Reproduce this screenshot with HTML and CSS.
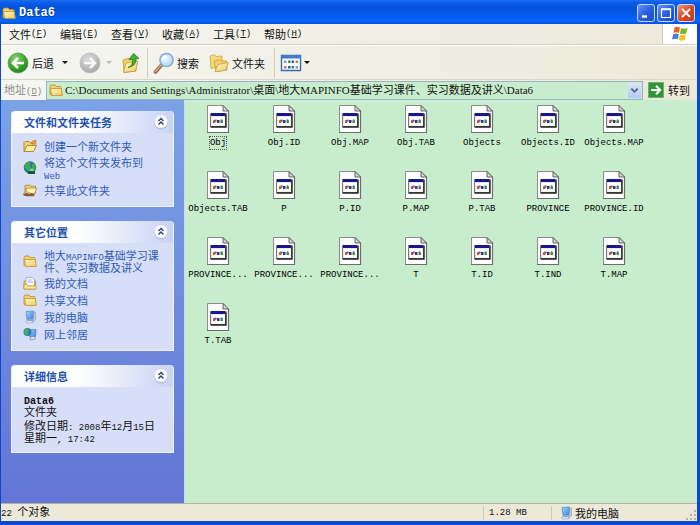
FILE: index.html
```
<!DOCTYPE html>
<html lang="zh-CN">
<head>
<meta charset="utf-8">
<title>Data6</title>
<link rel="stylesheet" href="styles.css">
</head>
<body>
<svg class="defs" aria-hidden="true">
  <defs>
    <linearGradient id="gFold" x1="0" y1="0" x2="1" y2="1"><stop offset="0" stop-color="#fffbd0"/><stop offset="1" stop-color="#efc95c"/></linearGradient>
    <radialGradient id="gGreen" cx=".4" cy=".3" r=".75"><stop offset="0" stop-color="#8fd878"/><stop offset=".6" stop-color="#3ba42c"/><stop offset="1" stop-color="#1f7d1a"/></radialGradient>
    <radialGradient id="gGrey" cx=".4" cy=".3" r=".75"><stop offset="0" stop-color="#dcdcdc"/><stop offset="1" stop-color="#a5a5a5"/></radialGradient>
    <radialGradient id="gLens" cx=".4" cy=".35" r=".7"><stop offset="0" stop-color="#f4fcff"/><stop offset="1" stop-color="#a5d5f2"/></radialGradient>
    <linearGradient id="gScreen" x1="0" y1="0" x2="1" y2="1"><stop offset="0" stop-color="#a8dcff"/><stop offset="1" stop-color="#2e80de"/></linearGradient>
  </defs>
  <symbol id="folder" viewBox="0 0 14 14">
    <path d="M1 3.5 2 2h4l1.3 1.5H11q1 0 1 1V12H2q-1 0-1-1Z" fill="#f3d36c" stroke="#b38b2a" stroke-width=".8"/>
    <path d="M1.5 5.5H12.3L13.4 12.4H2.8Z" fill="url(#gFold)" stroke="#bd922d" stroke-width=".8"/>
  </symbol>
  <symbol id="newfolder" viewBox="0 0 14 14">
    <path d="M1 3.5 2 2.500h4l1.300 1.500H10V12H1Z" fill="#f3d36c" stroke="#a87420" stroke-width=".8"/>
    <path d="M1 12.500 4 6.500H13.400L10.500 12.500Z" fill="#fff0a0" stroke="#a87420" stroke-width=".8"/>
    <path d="M8 4Q9 1 13 1.500L12.500 5.500 10.500 4.500Z" fill="#f39c3c" stroke="#c06a1c" stroke-width=".6"/>
  </symbol>
  <symbol id="globe" viewBox="0 0 14 14">
    <circle cx="7" cy="6.500" r="5.800" fill="#2b70b9" stroke="#1b5b38" stroke-width=".7"/>
    <path d="M2 3.500 5 1.200 8 2 6.500 4.500 8.500 7 5.500 10.500 3.500 8 1.500 7ZM9 3l3-.3 1 4-2.500 3L9 7Z" fill="#3fae4a"/>
    <path d="M5 10h7v3H5Z" fill="#0e5a3b"/><path d="m9 7 3 3H6Z" fill="#8fd67e"/>
  </symbol>
  <symbol id="share" viewBox="0 0 14 14">
    <path d="M2 2.500 7 2l1 1.300h4.500V10H2Z" fill="#f5d978" stroke="#a17a2c" stroke-width=".8"/>
    <path d="M3.500 5H13.500L12 10.500H2.500Z" fill="#fff0b0" stroke="#a17a2c" stroke-width=".7"/>
    <path d="M.5 10 4 8.500 8 10.500 12 11.500 11 13.300H4L.5 12.500Z" fill="#8a5b32"/>
    <path d="M1 10.300 4 9.300l3 1.600" stroke="#f0bf8a" fill="none"/>
  </symbol>
  <symbol id="docs" viewBox="0 0 14 14">
    <path d="M1 5h11.500v8H1Z" fill="#f3cf62" stroke="#b38b2a" stroke-width=".8"/>
    <path d="M3 1.500h6L11.500 4v6H3Z" fill="#fff" stroke="#7d97bd" stroke-width=".7"/>
    <path d="M4.500 4h4M4.500 6H10" stroke="#7fa8df" stroke-width=".9"/>
    <path d="M1 8.500h3l1 1.500h8v3H1Z" fill="#ffe894" stroke="#bd922d" stroke-width=".7"/>
  </symbol>
  <symbol id="computer" viewBox="0 0 14 14">
    <path d="M10 2.500 12.500 2V10L9 12Z" fill="#b9c6d8" stroke="#8291ad" stroke-width=".5"/>
    <path d="M3 1.500 10.500 1 10 9 4 9.500Z" fill="url(#gScreen)" stroke="#628fc4" stroke-width=".8"/>
    <path d="M5 9.500h4l1.500 2H4Z" fill="#90a8cb"/><path d="M2.500 11 9 10.700l1.500 1.800-7 .7Z" fill="#e6ecf6" stroke="#8399bb" stroke-width=".6"/>
  </symbol>
  <symbol id="network" viewBox="0 0 14 14">
    <path d="M6 3 13 2.500 12.500 9.500 7 10Z" fill="url(#gScreen)" stroke="#527db8" stroke-width=".8"/>
    <circle cx="4.500" cy="5" r="4" fill="#3276be"/>
    <path d="M2 2.500 5 1.200 6 3.500 4 5 5.500 7 3.500 8.500 1 6Z" fill="#45b552"/>
    <path d="m7 10 4-.5 1.500 2.500-5 1Z" fill="#e1e8f4" stroke="#7187a8" stroke-width=".7"/>
  </symbol>
  <symbol id="chev" viewBox="0 0 16 16">
    <circle cx="8" cy="8.500" r="7" fill="#7f93cf" opacity=".5"/>
    <circle cx="8" cy="7.500" r="6.800" fill="#fff" stroke="#c3cdea" stroke-width=".6"/>
    <path d="m5.500 7 2.500-2.500L10.500 7M5.500 10.500 8 8l2.500 2.500" fill="none" stroke="#223a74" stroke-width="1.300"/>
  </symbol>
  <symbol id="file" viewBox="0 0 24 30">
    <path d="M1.500 1.500H17L22.500 7V28.500H1.500Z" fill="#fff" stroke="#8c8c8c"/>
    <path d="M1 28.500H22.500V7" fill="none" stroke="#6e6e6e" stroke-width="1.200"/>
    <path d="M17 1.500V7H22.500Z" fill="#d5d9d5" stroke="#555" stroke-width=".9"/>
    <path d="M4.500 9.500H19.500V22.500H4.500Z" fill="#e9e9e9" stroke="#777"/>
    <path d="M4.500 23H20V9.500" fill="none" stroke="#222" stroke-width="1.400"/>
    <path d="M5 9H19V12H5Z" fill="#18188e"/><path d="M6 13H18.500V21.500H6Z" fill="#fff"/>
    <path d="M7 16.500 9 15.500 10 16.500 9 19H7Z" fill="#c44d38"/><path d="M9.500 15.500h1v2h-1ZM11 16h2.500v3H11Z" fill="#343489"/><path d="M14.500 16 16 15l1 2v2h-2.500Z" fill="#3d8a54"/>
  </symbol>
</svg>

<div class="window">
  <header class="titlebar">
    <svg class="ico14"><use href="#folder"/></svg>
    <h1>Data6</h1>
    <button class="win" aria-label="最小化"><svg viewBox="0 0 16 16"><path d="M4 11.500H9" stroke="#fff" stroke-width="2.400"/></svg></button>
    <button class="win" aria-label="最大化"><svg viewBox="0 0 16 16"><path d="M3.500 4.500H12.500V12.500H3.500Z" fill="none" stroke="#fff" stroke-width="1.200"/><path d="M3 4.200H13" stroke="#fff" stroke-width="2"/></svg></button>
    <button class="win close" aria-label="关闭"><svg viewBox="0 0 16 16"><path d="m4 4 8 8M12 4l-8 8" stroke="#fff" stroke-width="1.900"/></svg></button>
  </header>

  <div class="frame">
    <nav class="menubar">
      <button>文件<span class="en">(<u>F</u>)</span></button>
      <button>编辑<span class="en">(<u>E</u>)</span></button>
      <button>查看<span class="en">(<u>V</u>)</span></button>
      <button>收藏<span class="en">(<u>A</u>)</span></button>
      <button>工具<span class="en">(<u>T</u>)</span></button>
      <button>帮助<span class="en">(<u>H</u>)</span></button>
      <div class="flag"><svg viewBox="0 0 18 18">
        <path d="M3.500 2.500Q6 1 9 2.500L8 8Q5 6.500 2.500 8Z" fill="#e8622c"/>
        <path d="M10 3Q13 4.500 16.500 3L15.200 8.500Q12 10 9 8.500Z" fill="#76b82e"/>
        <path d="M2.300 9Q5 7.700 7.800 9.200L6.700 14.500Q4 13 1 14.500Z" fill="#3f7fdc"/>
        <path d="M8.800 9.500Q12 11 15 9.600L13.800 15Q11 16.500 7.700 15Z" fill="#f6c327"/>
      </svg></div>
    </nav>

    <div class="toolbar">
      <button class="back"><svg class="ico22" viewBox="0 0 22 22"><circle cx="11" cy="11" r="10" fill="url(#gGreen)" stroke="#4b9a41" stroke-width=".7"/><path d="M17 11H6.500M11 6 6 11l5 5" fill="none" stroke="#fff" stroke-width="2.500"/></svg>后退</button>
      <button class="drop" aria-label="后退列表"><i class="tri"></i></button>
      <button class="fwd" aria-label="前进" disabled><svg class="ico22" viewBox="0 0 22 22"><circle cx="11" cy="11" r="10" fill="url(#gGrey)" stroke="#b5b5b5" stroke-width=".7"/><path d="M5 11H15.500M11 6l5 5-5 5" fill="none" stroke="#f7f7f7" stroke-width="2.500"/></svg><i class="tri pale"></i></button>
      <button class="up" aria-label="向上"><svg class="ico22" viewBox="0 0 22 22"><path d="M3 8 9 6l1.500 1.500H16V19L4 20.500Z" fill="#f1cf63" stroke="#c29a38" stroke-width=".8"/><path d="M3.500 20.500 6 11 18 9 15.500 19Z" fill="url(#gFold)" stroke="#c29a38" stroke-width=".8"/><path d="M8 15.500Q13 14 12.500 7.500H9L13.500 1.500 19 6.500H16Q16.500 14 8 15.500Z" fill="#43ad35" stroke="#237d20" stroke-width=".8"/></svg></button>
      <button class="search"><svg class="ico22" viewBox="0 0 22 22"><path d="M8.500 13 2.500 20" stroke="#9a6a4c" stroke-width="3.600" stroke-linecap="round"/><path d="M8 13 2.500 19.500" stroke="#d9a37e" stroke-width="1.500" stroke-linecap="round"/><circle cx="13.500" cy="8" r="6.600" fill="url(#gLens)" stroke="#86a9cf" stroke-width="1.500"/><path d="M9.500 8Q10 4.500 13.500 4" fill="none" stroke="#fff" stroke-width="1.300"/></svg>搜索</button>
      <button class="folders"><svg class="ico22" viewBox="0 0 22 22"><path d="M2 4 6.500 2.500 8 4.500 14 4V14L3 16.500Z" fill="#f4d979" stroke="#cda644" stroke-width=".8"/><path d="M6 9.500 11 7.500 12.500 9H18.500L19 18 8 19.500Z" fill="#f2d16a" stroke="#c49b38" stroke-width=".8"/><path d="M7 19.500 10 12.500 20.500 10.500 17.500 18.500Z" fill="url(#gFold)" stroke="#c49b38" stroke-width=".8"/></svg>文件夹</button>
      <button class="views" aria-label="查看"><svg viewBox="0 0 22 18"><path d="M1.500 1.500H20.500V16.500H1.500Z" fill="#fff" stroke="#316aaf" stroke-width="1.400"/><path d="M1 1H21V4.500H1Z" fill="#3e7bd0"/><path d="M4 6.500h2.500V9H4ZM15.500 12H18v2.500h-2.500Z" fill="#8199b8"/><path d="M8 6.500h2.500V9H8ZM11.500 12H14v2.500h-2.500Z" fill="#2c9360"/><path d="M11.500 6.500H14V9h-2.500ZM8 12h2.500v2.500H8Z" fill="#375dab"/><path d="M15.500 6.500H18V9h-2.500ZM4 12h2.500v2.500H4Z" fill="#bd7468"/></svg><i class="tri"></i></button>
    </div>

    <form class="address">
      <label for="path">地址<span class="en">(<u>D</u>)</span></label>
      <div class="combo">
        <svg class="ico14"><use href="#folder"/></svg>
        <input id="path" type="text" value="C:\Documents and Settings\Administrator\桌面\地大MAPINFO基础学习课件、实习数据及讲义\Data6">
        <button type="button" class="arrow" aria-label="展开"><svg viewBox="0 0 10 10"><path d="m1.500 3 3.500 3.500L8.500 3" fill="none" stroke="#4a5f8a" stroke-width="2"/></svg></button>
      </div>
      <button type="button" class="go"><svg viewBox="0 0 16 16"><path d="M.5.5H15.500V15.500H.5Z" fill="#2f9637" stroke="#6fae6d"/><path d="M3 8H12M8 3.800 12.200 8 8 12.200" fill="none" stroke="#fff" stroke-width="2"/></svg>转到</button>
    </form>

    <div class="main">
      <aside>
        <section class="panel">
          <h2>文件和文件夹任务<button aria-label="折叠"><svg><use href="#chev"/></svg></button></h2>
          <ul>
            <li><svg class="ico14"><use href="#newfolder"/></svg><a href="#">创建一个新文件夹</a></li>
            <li><svg class="ico14"><use href="#globe"/></svg><a href="#">将这个文件夹发布到<br><span class="en">Web</span></a></li>
            <li><svg class="ico14"><use href="#share"/></svg><a href="#">共享此文件夹</a></li>
          </ul>
        </section>
        <section class="panel">
          <h2>其它位置<button aria-label="折叠"><svg><use href="#chev"/></svg></button></h2>
          <ul>
            <li><svg class="ico14"><use href="#folder"/></svg><a href="#">地大<span class="en">MAPINFO</span>基础学习课<br>件、实习数据及讲义</a></li>
            <li><svg class="ico14"><use href="#docs"/></svg><a href="#">我的文档</a></li>
            <li><svg class="ico14"><use href="#folder"/></svg><a href="#">共享文档</a></li>
            <li><svg class="ico14"><use href="#computer"/></svg><a href="#">我的电脑</a></li>
            <li><svg class="ico14"><use href="#network"/></svg><a href="#">网上邻居</a></li>
          </ul>
        </section>
        <section class="panel">
          <h2>详细信息<button aria-label="折叠"><svg><use href="#chev"/></svg></button></h2>
          <div class="details">
            <p><b>Data6</b><br>文件夹</p>
            <p>修改日期<span class="en">: 2008</span>年<span class="en">12</span>月<span class="en">15</span>日<br>星期一<span class="en">, 17:42</span></p>
          </div>
        </section>
      </aside>
      <ul class="files">
        <li><svg><use href="#file"/></svg><span class="focus">Obj</span></li>
        <li><svg><use href="#file"/></svg><span>Obj.ID</span></li>
        <li><svg><use href="#file"/></svg><span>Obj.MAP</span></li>
        <li><svg><use href="#file"/></svg><span>Obj.TAB</span></li>
        <li><svg><use href="#file"/></svg><span>Objects</span></li>
        <li><svg><use href="#file"/></svg><span>Objects.ID</span></li>
        <li><svg><use href="#file"/></svg><span>Objects.MAP</span></li>
        <li><svg><use href="#file"/></svg><span>Objects.TAB</span></li>
        <li><svg><use href="#file"/></svg><span>P</span></li>
        <li><svg><use href="#file"/></svg><span>P.ID</span></li>
        <li><svg><use href="#file"/></svg><span>P.MAP</span></li>
        <li><svg><use href="#file"/></svg><span>P.TAB</span></li>
        <li><svg><use href="#file"/></svg><span>PROVINCE</span></li>
        <li><svg><use href="#file"/></svg><span>PROVINCE.ID</span></li>
        <li><svg><use href="#file"/></svg><span>PROVINCE...</span></li>
        <li><svg><use href="#file"/></svg><span>PROVINCE...</span></li>
        <li><svg><use href="#file"/></svg><span>PROVINCE...</span></li>
        <li><svg><use href="#file"/></svg><span>T</span></li>
        <li><svg><use href="#file"/></svg><span>T.ID</span></li>
        <li><svg><use href="#file"/></svg><span>T.IND</span></li>
        <li><svg><use href="#file"/></svg><span>T.MAP</span></li>
        <li><svg><use href="#file"/></svg><span>T.TAB</span></li>
      </ul>
    </div>

    <footer class="status">
      <span class="count"><span class="en">22 </span>个对象</span>
      <span class="size en">1.28 MB</span>
      <span class="zone"><svg class="ico14"><use href="#computer"/></svg>我的电脑</span>
      <svg class="grip" viewBox="0 0 12 12"><path d="M9 1h2v2H9ZM5 5h2v2H5ZM9 5h2v2H9ZM1 9h2v2H1ZM5 9h2v2H5ZM9 9h2v2H9Z" fill="#b8b4a2"/></svg>
    </footer>
  </div>
</div>
</body>
</html>
```
FILE: styles.css
```
* { box-sizing: border-box; }
body {
  margin: 0;
  font: 11px/14px "Noto Sans CJK SC", sans-serif;
  color: #111;
}
h1, h2, p, ul { margin: 0; padding: 0; list-style: none; }
button { margin: 0; padding: 0; border: 0; background: none; font: inherit; color: inherit; display: flex; align-items: center; }
a { color: #2f5bb8; text-decoration: none; }
svg { display: block; flex: none; }
u { text-underline-offset: 1px; }
.defs { position: absolute; width: 0; height: 0; }
.en { font-family: "Liberation Mono", monospace; font-size: 9px; }
.ico14 { width: 14px; height: 14px; }
.ico22 { width: 22px; height: 22px; }

.window { min-height: 100vh; display: flex; flex-direction: column; background: #0a48d0; }

.titlebar {
  height: 24px;
  display: flex;
  align-items: center;
  gap: 2px;
  padding: 2px 5px 0 2px;
  background: linear-gradient(#1c6cf0 0, #0a5cea 3px, #0453dd 8px, #0458e8 14px, #0466ff 21px, #0450dc 24px);
}
.titlebar h1 {
  flex: 1;
  padding-left: 1px;
  font: bold 12px/14px "Liberation Mono", monospace;
  color: #fff;
  text-shadow: 1px 1px #0a3a98;
}
.win {
  width: 18px;
  height: 18px;
  border: 1px solid #c9d9fb;
  border-radius: 3px;
  background: linear-gradient(135deg, #6a96f5, #2a5fe0 50%, #1c4ccb);
}
.win.close { background: linear-gradient(135deg, #f09a78, #dc4b24 50%, #c2391a); }
.win svg { width: 16px; height: 16px; }

.frame {
  flex: 1;
  display: flex;
  flex-direction: column;
  margin: 0 3px 4px 1px;
  background: linear-gradient(90deg, #f5f6f2, #ece9d8);
}

.menubar { display: flex; height: 21px; padding-left: 8px; gap: 13px; border-bottom: 1px solid #d3d0c0; }
.menubar button { width: 38px; white-space: nowrap; }
.flag { margin-left: auto; width: 35px; display: grid; place-items: center; background: #fff; border-left: 1px solid #d0cdbe; }
.flag svg { width: 18px; height: 18px; }

.toolbar { display: flex; align-items: center; height: 35px; padding-left: 6px; border-top: 1px solid #fff; border-bottom: 1px solid #dad7c8; }
.tri { border: 3px solid transparent; border-top-color: #111; border-bottom: 0; }
.tri.pale { border-top-color: #bbb; }
.back { gap: 3px; }
.drop { padding: 0 11px 0 8px; }
.fwd { gap: 5px; }
.up { padding: 0 5px 0 8px; }
.search, .views { border-left: 1px solid #d0cdbe; height: 30px; padding-left: 5px; }
.search, .folders { gap: 2px; }
.folders { padding: 0 9px; }
.views { gap: 2px; }
.views svg { width: 22px; height: 18px; }

.address { display: flex; align-items: center; height: 20px; padding-right: 7px; }
.address label { width: 45px; padding-left: 3px; color: #8b8b85; white-space: nowrap; }
.combo { flex: 1; min-width: 0; display: flex; align-items: center; height: 19px; padding: 0 1px 0 2px; border: 1px solid #9cb2c4; background: #c7edcc; }
.combo input {
  flex: 1;
  min-width: 0;
  padding: 0 0 0 2px;
  border: 0;
  background: none;
  outline: 0;
  font: 11px/16px "Liberation Serif", "Noto Sans CJK SC", serif;
  color: #111;
}
.arrow { width: 13px; height: 15px; justify-content: center; background: linear-gradient(#dbe5fd, #b3c8f4); border-radius: 1px; }
.arrow svg { width: 9px; height: 9px; }
.go { gap: 4px; margin-left: 5px; }
.go svg { width: 16px; height: 16px; }

.main { flex: 1; display: flex; background: #c7edcc; }
aside {
  width: 184px;
  flex: none;
  display: flex;
  flex-direction: column;
  gap: 14px;
  padding: 11px 10px 14px 10px;
  background: linear-gradient(#7ba2e7, #6375d6);
  border-right: 1px solid #c5dff0;
}
.panel { background: #d6dff7; border: 1px solid #f1f4fd; border-top: 0; border-radius: 4px 4px 0 0; }
.panel h2 {
  display: flex;
  align-items: center;
  justify-content: space-between;
  height: 22px;
  padding: 0 4px 0 12px;
  border-radius: 4px 4px 0 0;
  background: linear-gradient(90deg, #fff 40%, #c8d4f4);
  font-size: 11px;
  font-weight: bold;
  color: #1d4fae;
}
.panel h2 svg { width: 16px; height: 16px; }
.panel ul { display: grid; gap: 3px; padding: 6px 8px 9px 11px; }
.panel li { display: flex; align-items: center; gap: 7px; line-height: 12px; min-height: 14px; white-space: nowrap; }
.panel .en { line-height: 0; }
.details { display: grid; gap: 2px; padding: 6px 6px 9px 12px; line-height: 12px; white-space: nowrap; }
.details b { font: bold 10px/0 "Liberation Mono", monospace; }

.files {
  flex: 1;
  display: grid;
  grid-template-columns: repeat(auto-fill, 66px);
  grid-auto-rows: 66px;
  align-content: start;
  padding-top: 4px;
  font: 9px/12px "Liberation Mono", monospace;
  color: #000;
}
.files li { display: flex; flex-direction: column; align-items: center; gap: 2px; }
.files svg { width: 24px; height: 30px; }
.files span { border: 1px solid transparent; }
.files .focus { border: 1px dotted #555; }

.status { display: flex; align-items: center; height: 18px; border-top: 1px solid #b5b29f; background: #ece9d8; }
.count { flex: 1; }
.size { width: 68px; padding-left: 5px; border-left: 1px solid #cbc8b8; }
.zone { display: flex; align-items: center; gap: 2px; width: 134px; padding-left: 7px; border-left: 1px solid #cbc8b8; }
.grip { width: 12px; height: 12px; align-self: flex-end; }
```
